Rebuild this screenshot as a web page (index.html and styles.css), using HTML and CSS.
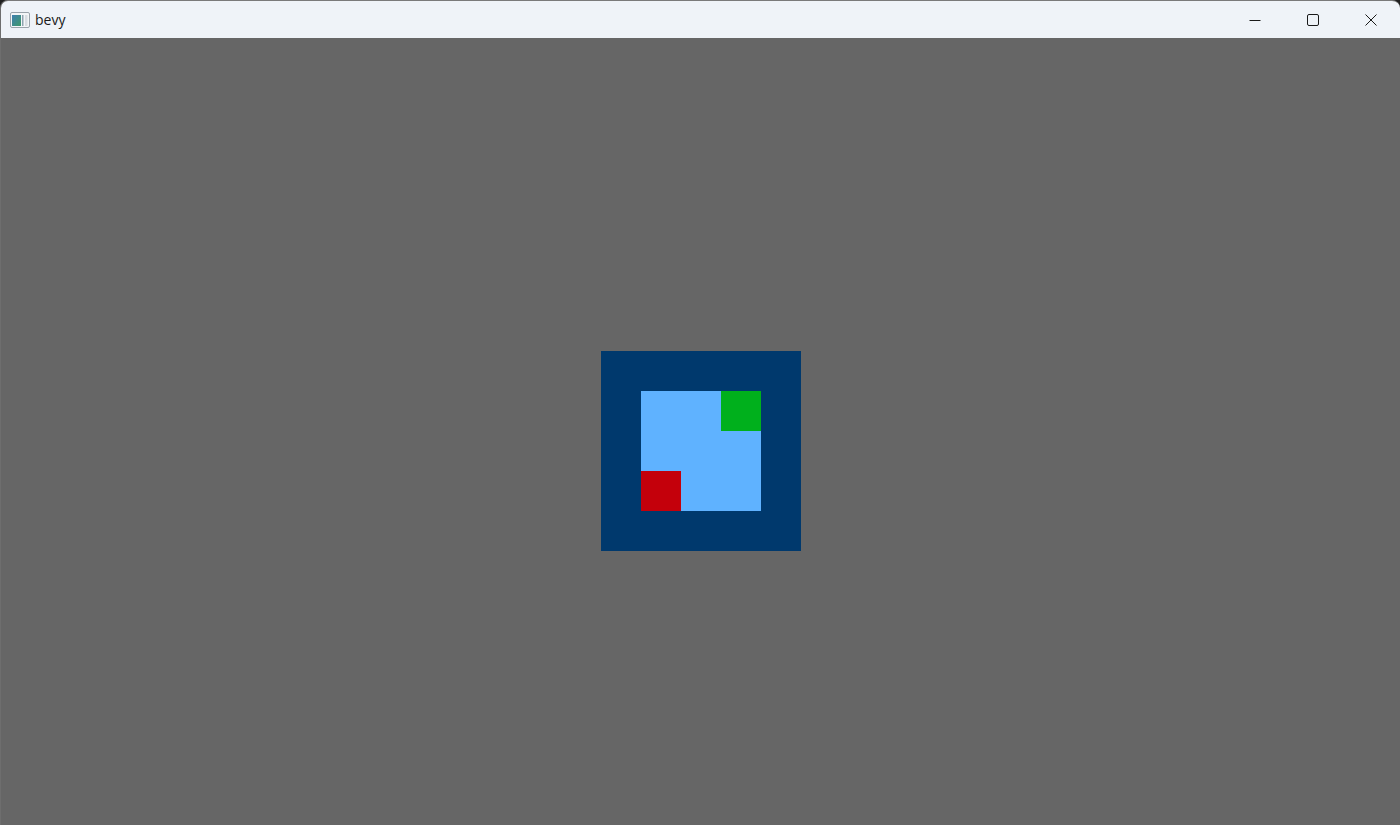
FILE: index.html
```html
<!DOCTYPE html>
<html>
<head>
<meta charset="utf-8">
<link rel="stylesheet" href="styles.css">
</head>
<body>
<div class="window">
  <div class="titlebar">
    <div class="title">
      <svg class="app-icon" width="20" height="16" viewBox="0 0 20 16">
        <defs>
          <linearGradient id="g" x1="0" y1="0" x2="1" y2="1">
            <stop offset="0" stop-color="#3f7fb0"/>
            <stop offset="1" stop-color="#3f9a6a"/>
          </linearGradient>
        </defs>
        <rect x="0.5" y="0.5" width="19" height="15" rx="1.5" fill="#f4f6f8" stroke="#9aa3ab"/>
        <rect x="2" y="3" width="9" height="11" fill="url(#g)"/>
        <rect x="12" y="3" width="1.5" height="11" fill="#8fa3b0"/>
        <rect x="15" y="3" width="2.5" height="11" fill="#d8dde2"/>
      </svg>
      <span class="title-text">bevy</span>
    </div>
    <div class="controls">
      <div class="ctl">
        <svg width="12" height="12" viewBox="0 0 12 12"><path d="M0.5 6.5 H11.5" stroke="#1a1a1a" stroke-width="1"/></svg>
      </div>
      <div class="ctl">
        <svg width="12" height="12" viewBox="0 0 12 12"><rect x="0.5" y="0.5" width="11" height="11" rx="1.5" fill="none" stroke="#1a1a1a" stroke-width="1"/></svg>
      </div>
      <div class="ctl">
        <svg width="12" height="12" viewBox="0 0 12 12"><path d="M0.5 0.5 L11.5 11.5 M11.5 0.5 L0.5 11.5" stroke="#1a1a1a" stroke-width="1"/></svg>
      </div>
    </div>
  </div>
  <div class="content">
    <div class="outer">
      <div class="inner">
        <div class="row">
          <div class="cell"></div><div class="cell"></div><div class="cell green"></div>
        </div>
        <div class="row">
          <div class="cell"></div><div class="cell"></div><div class="cell"></div>
        </div>
        <div class="row">
          <div class="cell red"></div><div class="cell"></div><div class="cell"></div>
        </div>
      </div>
    </div>
  </div>
</div>
</body>
</html>
```

FILE: styles.css
```css
html, body {
  margin: 0;
  padding: 0;
  width: 1400px;
  height: 825px;
  overflow: hidden;
  background: #202020;
}

.window {
  width: 1399px;
  height: 825px;
  border-left: 1px solid #6e6e6e;
  border-top: 1px solid #7a7a7a;
  border-top-left-radius: 8px;
  border-top-right-radius: 8px;
  overflow: hidden;
  background: #666666;
  display: flex;
  flex-direction: column;
}

.titlebar {
  height: 37px;
  flex: none;
  background: #eff3f8;
  display: flex;
  align-items: center;
  justify-content: space-between;
  font-family: "Open Sans", "Noto Sans", sans-serif;
}

.title {
  display: flex;
  align-items: center;
  padding-left: 9px;
}

.app-icon {
  display: block;
  margin-top: 0px;
}

.title-text {
  margin-left: 5px;
  font-size: 14px;
  color: #1a1a1a;
  line-height: 18px;
}

.controls {
  display: flex;
  height: 100%;
}

.ctl {
  width: 58px;
  height: 100%;
  display: flex;
  align-items: center;
  justify-content: center;
}

.ctl svg {
  display: block;
}

.content {
  height: 825px;
  flex: none;
  display: flex;
  align-items: center;
  justify-content: center;
  background: #666666;
}

.outer {
  width: 200px;
  height: 200px;
  background: #00396d;
  display: flex;
  align-items: center;
  justify-content: center;
}

.inner {
  width: 120px;
  height: 120px;
  background: #5fb2ff;
  display: flex;
  flex-direction: column;
}

.row {
  display: flex;
}

.cell {
  width: 40px;
  height: 40px;
}

.green {
  background: #00b01c;
}

.red {
  background: #c4000b;
}
```
